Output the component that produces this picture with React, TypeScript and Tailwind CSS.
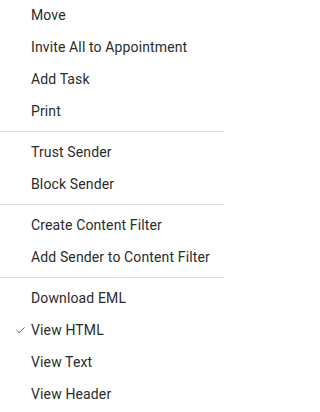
import { Check } from "lucide-react";

type Item = { label: string; checked?: boolean };

const groups: Item[][] = [
  [{ label: "Move" }, { label: "Invite All to Appointment" }, { label: "Add Task" }, { label: "Print" }],
  [{ label: "Trust Sender" }, { label: "Block Sender" }],
  [{ label: "Create Content Filter" }, { label: "Add Sender to Content Filter" }],
  [{ label: "Download EML" }, { label: "View HTML", checked: true }, { label: "View Text" }, { label: "View Header" }],
];

const App = () => {
  return (
    <div className="w-[224px] h-[412px] overflow-hidden bg-white font-['Roboto',sans-serif] text-[14px] tracking-[0.13px] text-[#2b2b2b]">
      <div className="-mt-[1px]">
        {groups.map((group, gi) => (
          <div key={gi}>
            {gi > 0 && <div className="my-1 h-px bg-[#e0e0e0]" />}
            {group.map((item) => (
              <div key={item.label} className="h-8 flex items-center">
                <div className="w-[31px] flex justify-end pr-[5px]">
                  {item.checked && <Check className="w-[11px] h-[11px] text-[#333]" strokeWidth={1.75} />}
                </div>
                <span className="whitespace-nowrap">{item.label}</span>
              </div>
            ))}
          </div>
        ))}
      </div>
    </div>
  );
};

export default App;
